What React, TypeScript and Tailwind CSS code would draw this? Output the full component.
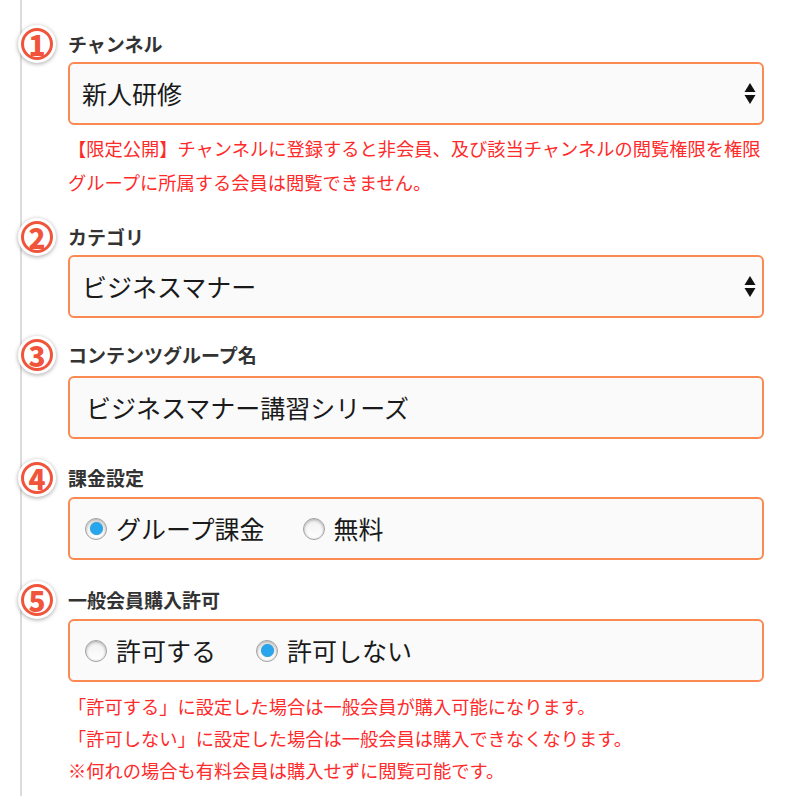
import { ReactNode } from "react";

const jp = "font-['Hiragino_Sans','Noto_Sans_CJK_JP',sans-serif]";

const Badge = ({ n }: { n: string }) => (
  <div className="-ml-[4px] -mt-[9px] flex h-[38px] w-[38px] shrink-0 items-center justify-center rounded-full bg-white shadow-[0_1px_4px_rgba(0,0,0,0.35)]">
    <div className="flex h-[32px] w-[32px] items-center justify-center rounded-full border-[3px] border-[#f0553c]">
      <span className="text-[28px] leading-none font-black text-[#f0553c]">{n}</span>
    </div>
  </div>
);

const SelectArrows = () => (
  <svg width="12" height="21" viewBox="0 0 12 21" className="shrink-0">
    <path d="M6 0 L11.5 9 L0.5 9 Z" fill="#111" />
    <path d="M0.5 12 L11.5 12 L6 21 Z" fill="#111" />
  </svg>
);

const Radio = ({ checked }: { checked?: boolean }) => (
  <span className="flex h-[22px] w-[22px] shrink-0 items-center justify-center rounded-full border border-[#a0a0a0] bg-gradient-to-b from-[#f0f0f0] to-[#ffffff] shadow-[inset_0_1px_3px_rgba(0,0,0,0.3)]">
    {checked && (
      <span className="h-[13px] w-[13px] rounded-full bg-[#27a6ee] shadow-[0_0_1px_rgba(0,0,0,0.4)]" />
    )}
  </span>
);

const Box = ({ children, className }: { children: ReactNode; className: string }) => (
  <div
    className={`flex h-[63px] items-center rounded-[6px] border-2 border-[#fa8a52] bg-[#fafafa] ${className}`}
  >
    {children}
  </div>
);

const Option = ({ label, checked }: { label: string; checked?: boolean }) => (
  <label className="flex items-center gap-[9px]">
    <Radio checked={checked} />
    <span className="text-[25px] text-[#1a1a1a]">{label}</span>
  </label>
);

const Section = ({
  n,
  title,
  top,
  children,
}: {
  n: string;
  title: string;
  top: string;
  children: ReactNode;
}) => (
  <div className={`flex items-start ${top}`}>
    <Badge n={n} />
    <div className="ml-[12px] flex-1">
      <div className="text-[19px] leading-[20px] font-bold text-[#333]">{title}</div>
      {children}
    </div>
  </div>
);

export default function App() {
  return (
    <div className={`h-[796px] w-[800px] overflow-hidden bg-white ${jp}`}>
      <div className="ml-[20px] h-full border-l-2 border-[#dcdcdc] pt-[34px] pr-[36px]">
        <Section n="1" title="チャンネル" top="mt-0">
          <Box className="mt-[8px] justify-between pr-[6px] pl-[12px]">
            <span className="text-[25px] text-[#1a1a1a]">新人研修</span>
            <SelectArrows />
          </Box>
          <div className="mt-[6px] text-[18.25px] leading-[34px] text-[#ff2a2a]">
            【限定公開】チャンネルに登録すると非会員、及び該当チャンネルの閲覧権限を権限グループに所属する会員は閲覧できません。
          </div>
        </Section>

        <Section n="2" title="カテゴリ" top="mt-[28px]">
          <Box className="mt-[8px] justify-between pr-[6px] pl-[12px]">
            <span className="text-[25px] text-[#1a1a1a]">ビジネスマナー</span>
            <SelectArrows />
          </Box>
        </Section>

        <Section n="3" title="コンテンツグループ名" top="mt-[27px]">
          <Box className="mt-[11px] pl-[16px]">
            <span className="text-[25px] text-[#1a1a1a]">ビジネスマナー講習シリーズ</span>
          </Box>
        </Section>

        <Section n="4" title="課金設定" top="mt-[29px]">
          <Box className="mt-[9px] gap-[38px] pl-[15px]">
            <Option label="グループ課金" checked />
            <Option label="無料" />
          </Box>
        </Section>

        <Section n="5" title="一般会員購入許可" top="mt-[30px]">
          <Box className="mt-[9px] gap-[40px] pl-[15px]">
            <Option label="許可する" />
            <Option label="許可しない" checked />
          </Box>
          <div className="mt-[8px] text-[18.25px] leading-[32px] text-[#ff2a2a]">
            <p>「許可する」に設定した場合は一般会員が購入可能になります。</p>
            <p>「許可しない」に設定した場合は一般会員は購入できなくなります。</p>
            <p>※何れの場合も有料会員は購入せずに閲覧可能です。</p>
          </div>
        </Section>
      </div>
    </div>
  );
}
